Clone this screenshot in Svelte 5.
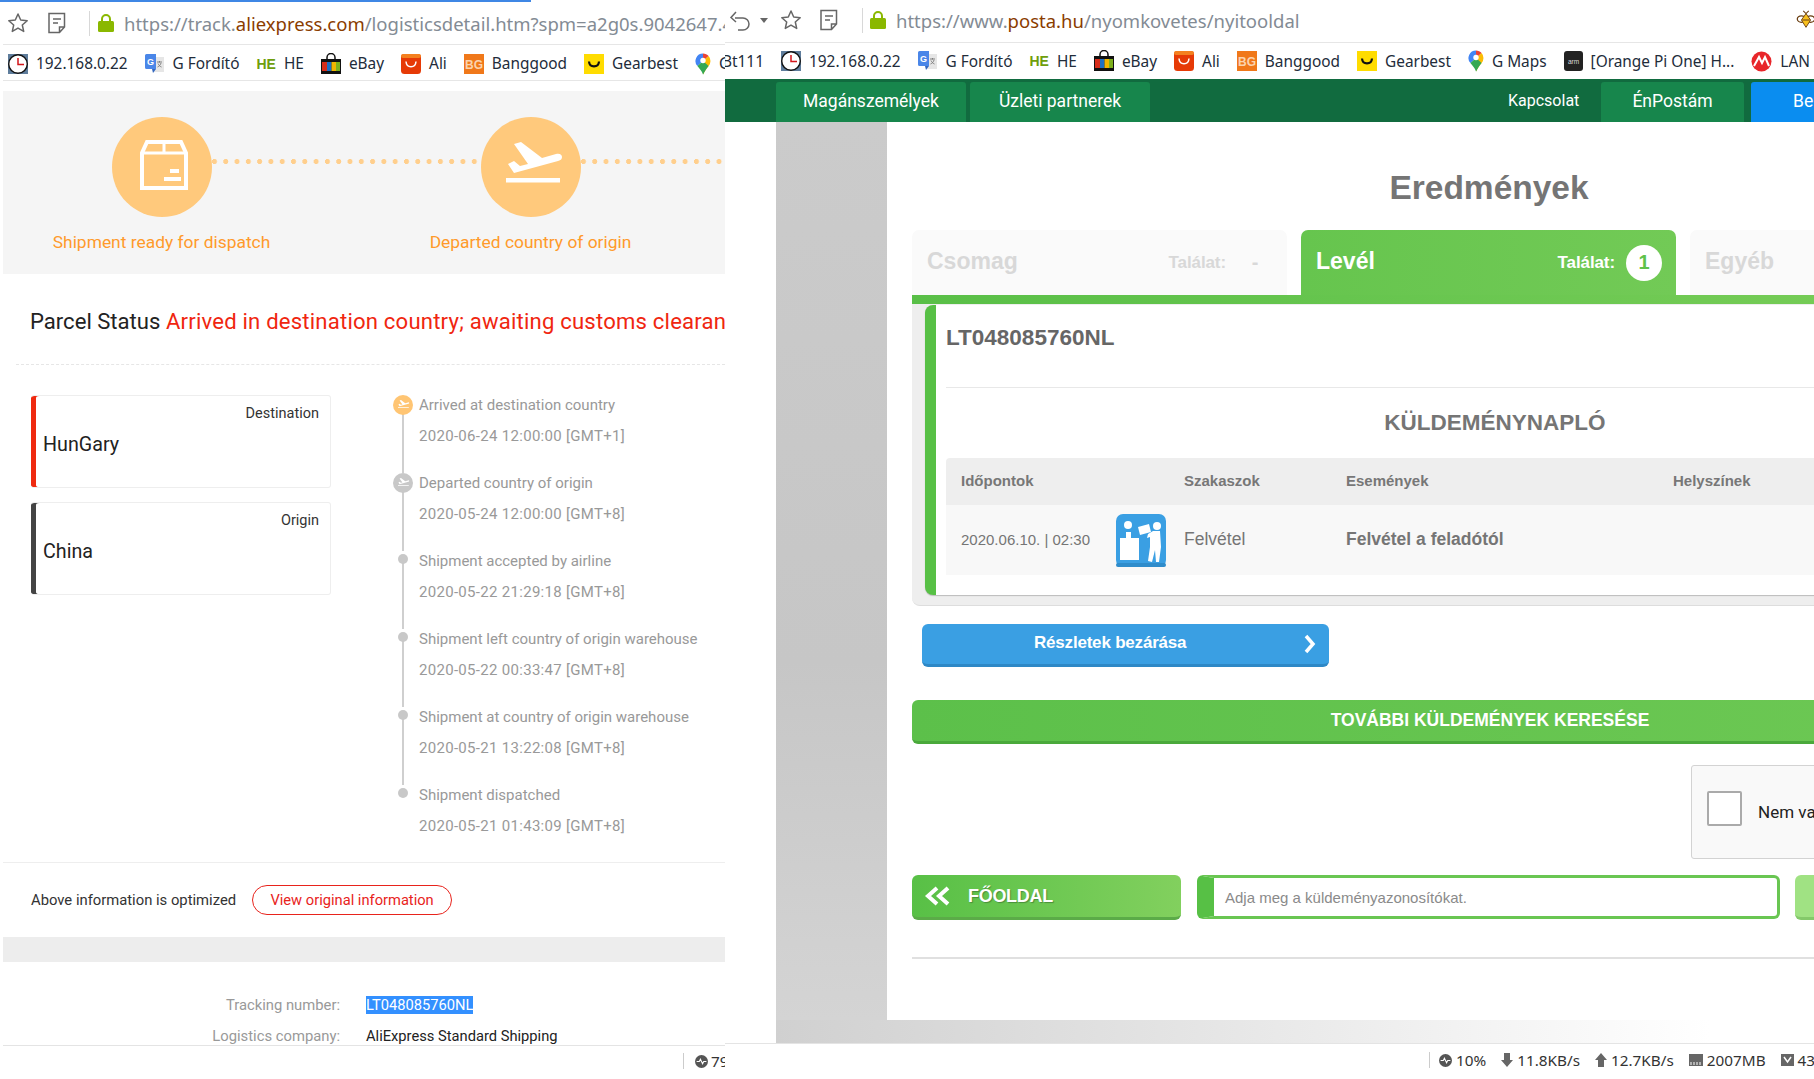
<script>
  const leftMarks = [
    { i: 'clock', t: '192.168.0.22' }, { i: 'trans', t: 'G Fordító' }, { i: 'he', t: 'HE' },
    { i: 'ebay', t: 'eBay' }, { i: 'ali', t: 'Ali' }, { i: 'bg', t: 'Banggood' },
    { i: 'gear', t: 'Gearbest' }, { i: 'maps', t: 'G Maps' }
  ];
  const rightMarks = [
    { i: 'clock', t: '192.168.0.22' }, { i: 'trans', t: 'G Fordító' }, { i: 'he', t: 'HE' },
    { i: 'ebay', t: 'eBay' }, { i: 'ali', t: 'Ali' }, { i: 'bg', t: 'Banggood' },
    { i: 'gear', t: 'Gearbest' }, { i: 'maps', t: 'G Maps' },
    { i: 'arm', t: '[Orange Pi One] H...' }, { i: 'micro', t: 'LAN' }
  ];
  const events = [
    { t: 'Arrived at destination country', d: '2020-06-24 12:00:00 [GMT+1]', k: 'now' },
    { t: 'Departed country of origin', d: '2020-05-24 12:00:00 [GMT+8]', k: 'past' },
    { t: 'Shipment accepted by airline', d: '2020-05-22 21:29:18 [GMT+8]', k: '' },
    { t: 'Shipment left country of origin warehouse', d: '2020-05-22 00:33:47 [GMT+8]', k: '' },
    { t: 'Shipment at country of origin warehouse', d: '2020-05-21 13:22:08 [GMT+8]', k: '' },
    { t: 'Shipment dispatched', d: '2020-05-21 01:43:09 [GMT+8]', k: '' }
  ];
</script>

{#snippet star()}
  <svg class="tool" width="22" height="22" viewBox="0 0 22 22"><path d="M11 2l2.7 6 6.5.7-4.9 4.3 1.4 6.4L11 16.100l-5.700 3.300 1.400-6.400-4.900-4.300 6.500-.7z" fill="none" stroke="#666" stroke-width="1.500" stroke-linejoin="round"/></svg>
{/snippet}
{#snippet note()}
  <svg class="tool" width="20" height="22" viewBox="0 0 20 22"><path d="M2 1.500h15.500v13.500l-5 5.500H2zM17.500 15h-5v5.500M6 7h8M6 11h5" fill="none" stroke="#666" stroke-width="1.500"/></svg>
{/snippet}
{#snippet lock()}
  <svg class="lock" width="16" height="20" viewBox="0 0 16 20"><path d="M4 9V6a4 4 0 0 1 8 0v3" fill="none" stroke="#8ab800" stroke-width="2"/><rect y="8" width="16" height="11" rx="1.500" fill="#8ab800"/></svg>
{/snippet}
{#snippet plane()}
  <path d="M25 61h54v4.500H25z M27 47l6-3 6 5 8-2-14-20 7-2 21 16 14-4c4-1 6 1 6 3s-1 3-4 4L33 56z" fill="#fff"/>
{/snippet}
{#snippet mark(i)}
  {#if i === 'clock'}
    <svg width="20" height="20" viewBox="0 0 20 20"><rect width="20" height="20" fill="#5f7d9c"/><circle cx="10" cy="10" r="9.300" fill="#fff" stroke="#111" stroke-width="1.400"/><path d="M10 4v6.500h6" fill="none" stroke="#d2161a" stroke-width="1.500"/></svg>
  {:else if i === 'trans'}
    <svg width="20" height="20" viewBox="0 0 20 20"><path d="M8 3h11v15H8z" fill="#e6e6e6"/><path d="M12 8h5M14.500 7v1.500M16 9c-.5 2-2 3.500-3.500 4M13 9.500c.6 1.500 2 3 3.500 3.500" fill="none" stroke="#777" stroke-width=".9"/><path d="M0 1.500A1.500 1.500 0 0 1 1.500 0H11v15H1.500A1.500 1.500 0 0 1 0 13.500z" fill="#4a86e8"/><path d="M8 19l3-4H7z" fill="#3367c0"/><text x="5.500" y="10.500" font-size="9" font-weight="700" fill="#fff" text-anchor="middle" font-family="Liberation Sans">G</text></svg>
  {:else if i === 'he'}
    <span class="he">HE</span>
  {:else if i === 'ebay'}
    <svg width="20" height="22" viewBox="0 0 20 22"><path d="M6 7V4.500a4 4 0 0 1 8 0V7" fill="none" stroke="#111" stroke-width="1.500"/><rect y="6" width="20" height="15" fill="#111"/><rect x="1" y="9" width="5" height="9" fill="#d62c1a"/><rect x="6" y="9" width="4.500" height="9" fill="#1c6fc4"/><rect x="10.500" y="9" width="4.500" height="9" fill="#f0b400"/><rect x="15" y="9" width="4" height="9" fill="#7db01c"/></svg>
  {:else if i === 'ali'}
    <svg width="20" height="20" viewBox="0 0 20 20"><rect width="20" height="20" rx="3.500" fill="#e63a06"/><rect width="20" height="4" rx="2" fill="#f4801f"/><path d="M5 7.500c.5 7 9.500 7 10 0" fill="none" stroke="#fff" stroke-width="1.500"/></svg>
  {:else if i === 'bg'}
    <svg width="20" height="20" viewBox="0 0 20 20"><rect width="20" height="20" fill="#f0781a"/><text x="10" y="14.500" font-size="12" font-weight="700" fill="#fbd3ae" text-anchor="middle" font-family="Liberation Sans">BG</text></svg>
  {:else if i === 'gear'}
    <svg width="20" height="20" viewBox="0 0 20 20"><rect width="20" height="20" fill="#ffdc00"/><path d="M5 7.500c.5 6.500 9.500 6.500 10 0" fill="none" stroke="#111" stroke-width="2.200"/></svg>
  {:else if i === 'maps'}
    <svg width="16" height="22" viewBox="0 0 16 22"><path d="M8 0.500a7.500 7.500 0 0 0-5.600 12.500L8 8z" fill="#4285f4"/><path d="M2.400 13C4.500 15.500 7 18 8 21.500L10 17 8 8z" fill="#34a853"/><path d="M8 .5c2.200 0 4.300 1 5.600 2.600L8 8z" fill="#ea4335"/><path d="M13.600 3.100A7.500 7.500 0 0 1 13.600 13C12 15 10.500 17 8 21.500V8z" fill="#fbbc04"/><path d="M8 8l5.600 5c-1.600 2-3.100 4-5.600 8.500z" fill="#34a853"/><circle cx="8" cy="7.500" r="2.700" fill="#fff"/></svg>
  {:else if i === 'arm'}
    <svg width="19" height="20" viewBox="0 0 19 20"><rect width="19" height="20" rx="3" fill="#222"/><text x="9.500" y="12.500" font-size="6.500" fill="#ddd" text-anchor="middle" font-family="Liberation Sans">arm</text></svg>
  {:else if i === 'micro'}
    <svg width="21" height="21" viewBox="0 0 21 21"><circle cx="10.500" cy="10.500" r="10" fill="#e8262a"/><path d="M3 15L8 6l3 6 3-6 4 9" fill="none" stroke="#fff" stroke-width="2"/></svg>
  {/if}
{/snippet}

<div class="desk">
  <section class="win left">
    <div class="progress"></div>
    <header class="bar">
      <span class="ic-star">{@render star()}</span>
      <span class="ic-note">{@render note()}</span>
      <span class="sep"></span>
      {@render lock()}
      <span class="url">https://track.<b>aliexpress.com</b>/logisticsdetail.htm?spm=a2g0s.9042647.4</span>
    </header>
    <nav class="marks lmarks">
      {#each leftMarks as m}
        <span class="bm"><span class="bmi">{@render mark(m.i)}</span>{m.t}</span>
      {/each}
    </nav>
    <div class="page">
      <div class="hero">
        <div class="step">
          <div class="circle">
            <svg width="100" height="100" viewBox="0 0 100 100"><path d="M30 71V36l5-11h34l5 11v35z" fill="none" stroke="#fff" stroke-width="4"/><path d="M30 36h44M52 25v11" stroke="#fff" stroke-width="3"/><path d="M58 52h9v4h-9zM52 60h17v4H52z" fill="#fff"/></svg>
          </div>
          <span class="dots one"></span>
          <p>Shipment ready for dispatch</p>
        </div>
        <div class="step">
          <div class="circle"><svg width="100" height="100" viewBox="0 0 100 100">{@render plane()}</svg></div>
          <span class="dots two"></span>
          <p>Departed country of origin</p>
        </div>
      </div>
      <h2 class="status">Parcel Status <em>Arrived in destination country; awaiting customs clearance</em></h2>
      <div class="detail">
        <div class="cards">
          <div class="card red"><span class="role">Destination</span><span class="place">HunGary</span></div>
          <div class="card dark"><span class="role">Origin</span><span class="place">China</span></div>
        </div>
        <ol class="timeline">
          {#each events as e, n}
            <li class:last={n === events.length - 1}>
              {#if e.k}
                <span class="node {e.k}"><svg width="20" height="20" viewBox="0 0 100 100">{@render plane()}</svg></span>
              {:else}
                <span class="dot"></span>
              {/if}
              <strong>{e.t}</strong>
              <time>{e.d}</time>
            </li>
          {/each}
        </ol>
      </div>
      <div class="optim"><span>Above information is optimized</span><button>View original information</button></div>
      <div class="band"></div>
      <dl class="track">
        <dt>Tracking number:</dt><dd><mark>LT048085760NL</mark></dd>
        <dt>Logistics company:</dt><dd>AliExpress Standard Shipping</dd>
      </dl>
    </div>
    <footer class="stat lstat">
      <span class="vr"></span>
      <svg width="13" height="13" viewBox="0 0 12 12"><circle cx="6" cy="6" r="6" fill="#555"/><path d="M1.500 6h2.500l1-2 2 4 1-2h2.500" fill="none" stroke="#fff"/></svg>
      <span>79</span>
    </footer>
  </section>

  <section class="win right">
    <header class="bar rbar">
      <svg width="22" height="22" viewBox="0 0 22 22"><path d="M6 9h8a6 6 0 0 1 0 12H9M7 3L2 8.500 7 13" fill="none" stroke="#666" stroke-width="1.500"/></svg>
      <span class="caret"></span>
      <span class="ic-star2">{@render star()}</span>
      <span class="ic-note2">{@render note()}</span>
      <span class="sep sep2"></span>
      {@render lock()}
      <span class="url url2">https://www.<b>posta.hu</b>/nyomkovetes/nyitooldal</span>
      <svg class="bee" width="20" height="22" viewBox="0 0 20 24"><ellipse cx="5" cy="11" rx="4.500" ry="3.500" fill="#fff" stroke="#6b3f12" stroke-width="1.400"/><ellipse cx="15" cy="11" rx="4.500" ry="3.500" fill="#fff" stroke="#6b3f12" stroke-width="1.400"/><path d="M10 5l5 7-5 8-5-8z" fill="#f8c01c" stroke="#6b3f12"/><path d="M7 2l3 3 3-3M6 12h8" fill="none" stroke="#6b3f12" stroke-width="1.200"/></svg>
    </header>
    <nav class="marks rmarks">
      <span class="cut">Bt111</span>
      {#each rightMarks as m}
        <span class="bm"><span class="bmi">{@render mark(m.i)}</span>{m.t}</span>
      {/each}
    </nav>
    <div class="topnav">
      <a class="tn" href="#a">Magánszemélyek</a>
      <a class="tn t2" href="#b">Üzleti partnerek</a>
      <span class="contact">Kapcsolat</span>
      <a class="tn t3" href="#c">ÉnPostám</a>
      <a class="tn blue" href="#d">Belépés</a>
    </div>
    <div class="rbody">
      <div class="rmain">
        <div class="stripe"></div>
        <main class="content">
          <h1>Eredmények</h1>
          <div class="tabs">
            <div class="tab"><span class="tname">Csomag</span><span class="hit">Találat:</span><span class="cnt">-</span></div>
            <div class="tab on"><span class="tname">Levél</span><span class="hit">Találat:</span><span class="cnt one">1</span></div>
            <div class="tab"><span class="tname">Egyéb</span><span class="hit">Találat:</span><span class="cnt">-</span></div>
          </div>
          <div class="tabline"></div>
          <div class="wrap">
            <div class="panel">
              <div class="pid">LT048085760NL</div>
              <h3>KÜLDEMÉNYNAPLÓ</h3>
              <div class="thead"><span>Időpontok</span><span>Szakaszok</span><span>Események</span><span>Helyszínek</span></div>
              <div class="trow">
                <span class="date">2020.06.10. | 02:30</span>
                <svg class="pic" width="50" height="53" viewBox="0 0 50 53">
                  <rect width="50" height="53" rx="7" fill="#3a9fe3"/><rect y="49" width="50" height="4" rx="2" fill="#2f8ccb"/>
                  <circle cx="12" cy="11" r="4" fill="#fff"/><circle cx="41" cy="12" r="4" fill="#fff"/>
                  <path d="M4 24h6v-6h5v6h8v22H4z" fill="#fff"/>
                  <path d="M22 13l11-3 2 8-11 3z" fill="#fff"/>
                  <path d="M32 20l5-3h7l1 16-2 15h-3l-1-12-3 12-4-1 2-14v-10l-3 1z" fill="#fff"/>
                </svg>
                <span class="phase">Felvétel</span>
                <span class="evt">Felvétel a feladótól</span>
              </div>
            </div>
          </div>
          <button class="close">Részletek bezárása<svg width="14" height="20" viewBox="0 0 14 20"><path d="M3 2l7 8-7 8" fill="none" stroke="#fff" stroke-width="3.500"/></svg></button>
          <button class="more">TOVÁBBI KÜLDEMÉNYEK KERESÉSE</button>
          <div class="captcha"><span class="check"></span><span class="robot">Nem vagyok robot</span></div>
          <div class="foot">
            <button class="home"><svg width="27" height="20" viewBox="0 0 27 20"><path d="M13 2L4 10l9 8M24 2l-9 8 9 8" fill="none" stroke="#fff" stroke-width="4"/></svg>FŐOLDAL</button>
            <div class="field">Adja meg a küldeményazonosítókat.</div>
            <div class="go"></div>
          </div>
          <hr />
        </main>
      </div>
      <div class="fade"></div>
    </div>
    <footer class="stat rstat">
      <span class="vr"></span>
      <span class="si"><svg width="13" height="13" viewBox="0 0 12 12"><circle cx="6" cy="6" r="6" fill="#555"/><path d="M1.500 6h2.500l1-2 2 4 1-2h2.500" fill="none" stroke="#fff"/></svg>10%</span>
      <span class="si"><svg width="12" height="14" viewBox="0 0 12 14"><path d="M3 0h6v7h3l-6 7-6-7h3z" fill="#666"/></svg>11.8KB/s</span>
      <span class="si"><svg width="12" height="14" viewBox="0 0 12 14"><path d="M3 14h6V7h3L6 0 0 7h3z" fill="#666"/></svg>12.7KB/s</span>
      <span class="si"><svg width="14" height="12" viewBox="0 0 14 12"><path d="M0 0h14v12H0z" fill="#666"/><path d="M2 8v3M5 8v3M8 8v3M11 8v3" stroke="#fff"/></svg>2007MB</span>
      <span class="si"><svg width="13" height="12" viewBox="0 0 13 12"><path d="M0 0h13v12H0z" fill="#666"/><path d="M3 3l3.500 5L10 3" fill="none" stroke="#fff" stroke-width="1.500"/></svg>434</span>
    </footer>
  </section>
</div>

<style>
  :global(body) { margin: 0; background: #fff; }
  * { box-sizing: border-box; }
  .desk { position: relative; width: 1814px; height: 1079px; overflow: hidden; background: #fff; }
  .win { position: absolute; top: 0; height: 1079px; display: flex; flex-direction: column; overflow: hidden; background: #fff; }
  .left { left: 0; width: 725px; font-family: Roboto, sans-serif; }
  .right { left: 725px; width: 1089px; }

  .progress { width: 531px; height: 2px; flex: none; background: #3f87e5; }
  .bar { height: 43px; flex: none; display: flex; align-items: center; padding-left: 4px; border-bottom: 1px solid #e6e6e6; margin-left: 3px; }
  .bar svg { flex: none; }
  .ic-star { display: flex; }
  .ic-note { margin-left: 18px; display: flex; }
  .sep { width: 1px; height: 25px; background: #d8d8d8; margin: 0 8px 0 22px; flex: none; }
  .tool { display: block; }
  .url { font: 18.500px "Noto Sans", sans-serif; color: #838b94; margin-left: 10px; white-space: nowrap; }
  .url b { font-weight: 400; color: #8a3c00; }
  .marks { height: 36px; flex: none; display: flex; align-items: center; padding-left: 5px; margin-left: 3px; border-bottom: 1px solid #e6e6e6; white-space: nowrap; font: 15.400px "Noto Sans", sans-serif; color: #222c3a; }
  .lmarks { padding-top: 2px; }
  .bm { display: inline-flex; align-items: center; margin-right: 17px; flex: none; }
  .bmi { display: inline-flex; align-items: center; margin-right: 8px; }
  .he { font: 700 14px "Liberation Sans", sans-serif; color: #6f9e0d; }

  .page { flex: 1; min-height: 0; overflow: hidden; margin-left: 3px; padding-top: 10px; }
  .hero { height: 183px; background: #f5f5f5; display: flex; overflow: hidden; padding-top: 26px; }
  .step { position: relative; flex: 0 0 369px; text-align: center; margin-left: -26px; }
  .step + .step { margin-left: 0; }
  .step p { margin: 12px 0 0; font-size: 17.400px; line-height: 26px; color: #ff9a2b; }
  .circle { width: 100px; height: 100px; border-radius: 50%; background: #ffc97c; margin: 0 auto; }
  .circle svg { display: block; }
  .dots { position: absolute; top: 42px; height: 5px; width: 269px; left: 234.500px; background: radial-gradient(circle at 2.500px 2.500px, #ffcf8d 2.300px, transparent 2.800px) 0 0 / 11.300px 5px repeat-x; }
  .status { margin: 0 0 0 13px; height: 91px; padding: 30px 0 0 14px; border-bottom: 1px dashed #e6e6e6; font-size: 22.100px; font-weight: 400; line-height: 34px; color: #222; white-space: nowrap; overflow: hidden; }
  .status em { font-style: normal; color: #f0260f; letter-spacing: .2px; }
  .detail { display: flex; height: 497px; padding: 30px 0 0 28px; }
  .cards { width: 300px; display: flex; flex-direction: column; gap: 14px; flex: none; }
  .card { height: 93px; border: 1px solid #eee; border-left: 0; border-radius: 3px; position: relative; padding: 8px 11px 0 12px; display: flex; flex-direction: column; }
  .card.red { box-shadow: inset 5px 0 0 #ef2a10; }
  .card.dark { box-shadow: inset 5px 0 0 #444; }
  .role { align-self: flex-end; font-size: 14.500px; line-height: 20px; color: #333; }
  .place { margin-top: 9px; font-size: 19.700px; line-height: 24px; color: #222; }
  .timeline { list-style: none; margin: 0 0 0 62px; padding: 0; width: 330px; }
  .timeline li { position: relative; height: 78px; padding-left: 26px; }
  .timeline li::before { content: ""; position: absolute; left: 9px; top: 10px; bottom: 0; width: 2px; background: #cfcfcf; }
  .timeline li.last::before { display: none; }
  .timeline strong, .timeline time { display: block; font-weight: 400; font-size: 15px; line-height: 20px; color: #999; white-space: nowrap; }
  .timeline time { margin-top: 11px; letter-spacing: .3px; }
  .node { position: absolute; left: 0; top: 0; width: 20px; height: 20px; border-radius: 50%; display: block; }
  .node svg { display: block; }
  .node.now { background: #ffc573; }
  .node.past { background: #c8c8c8; }
  .dot { position: absolute; left: 5px; top: 3px; width: 10px; height: 10px; border-radius: 50%; background: #c8c8c8; }
  .optim { height: 75px; border-top: 1px solid #eee; display: flex; align-items: center; padding-left: 28px; font-size: 14.800px; color: #333; }
  .optim button { margin-left: 16px; width: 200px; height: 30px; border: 1px solid #e8231c; border-radius: 15px; background: #fff; color: #e8231c; font: 14.700px Roboto, sans-serif; padding: 0; }
  .band { height: 25px; background: #ededed; }
  .track { margin: 34px 0 0; display: grid; grid-template-columns: 337px 1fr; column-gap: 26px; row-gap: 13px; font-size: 14.700px; line-height: 18px; }
  .track dt { text-align: right; color: #999; font-size: 14.800px; }
  .track dd { margin: 0; color: #222; }
  .track mark { background: #3390ff; color: #fff; display: inline-block; }

  .stat { flex: none; display: flex; align-items: center; background: #fff; border-top: 1px solid #e4e4e4; font: 15.300px "Noto Sans", sans-serif; color: #333; white-space: nowrap; padding-bottom: 3px; }
  .stat svg, .stat span { flex: none; }
  .lstat { height: 34px; margin-left: 3px; padding-left: 680px; gap: 3px; }
  .lstat .vr { margin-right: 8px; }
  .vr { width: 1px; height: 16px; background: #ccc; }
  .rstat { height: 36px; padding-left: 704px; }
  .rstat .vr { margin-right: 9px; }
  .si { display: inline-flex; align-items: center; gap: 4px; margin-right: 15px; }

  .rbar { height: 43px; margin-left: 0; padding-left: 4px; position: relative; padding-bottom: 2px; }
  .caret { width: 0; height: 0; border: 4px solid transparent; border-top: 5px solid #666; border-bottom: 0; margin-left: 9px; }
  .ic-star2 { display: flex; margin-left: 12px; }
  .ic-note2 { display: flex; margin-left: 17px; }
  .sep2 { margin: 0 7px 0 23px; }
  .url2 { margin-left: 10px; }
  .bee { position: absolute; left: 1071px; top: 9px; }
  .rmarks { height: 36px; margin-left: 0; padding-left: 0; border-bottom: 0; }
  .cut { margin-left: -3px; margin-right: 17px; flex: none; }
  .topnav { height: 43px; flex: none; background: #116b3f; display: flex; align-items: flex-end; padding-left: 51px; font: 17.500px Roboto, sans-serif; color: #fff; }
  .tn { flex: none; height: 40px; display: flex; align-items: center; justify-content: center; background: #17864c; color: #fff; text-decoration: none; border-radius: 3px 3px 0 0; width: 190px; padding-bottom: 3px; }
  .t2 { margin-left: 4px; width: 180px; }
  .contact { margin-left: 358px; align-self: center; font-size: 16px; width: 93px; flex: none; }
  .t3 { width: 143px; margin-right: 7px; }
  .blue { background: #0a8df0; width: 150px; justify-content: flex-start; padding-left: 42px; }

  .rbody { flex: 1; min-height: 0; display: flex; flex-direction: column; padding-left: 51px; font-family: "Liberation Sans", sans-serif; }
  .rmain { height: 898px; display: flex; overflow: hidden; }
  .stripe { flex: 0 0 111px; background: linear-gradient(#cbcbcb, #c6c6c6 60%, #d4d4d4); }
  .content { flex: 0 0 1181px; padding: 46px 0 0 25px; background: #fff; }
  h1 { margin: 0; width: 1154px; text-align: center; font-size: 33.500px; line-height: 40px; color: #757575; }
  .tabs { display: flex; gap: 14px; margin-top: 22px; }
  .tab { flex: 0 0 375px; height: 65px; background: #fafafa; border-radius: 7px 7px 0 0; display: flex; align-items: center; padding: 0 14px 0 15px; color: #d8d8d8; font-weight: 700; }
  .tab.on { background: linear-gradient(90deg, #66c54e, #72ca56); color: #fff; }
  .tname { font-size: 23px; line-height: 28px; margin-bottom: 3px; flex: 1; }
  .hit { font-size: 17px; letter-spacing: -.1px; }
  .cnt { width: 36px; height: 36px; margin-left: 11px; display: flex; align-items: center; justify-content: center; font-size: 20px; }
  .cnt.one { background: #fff; border-radius: 50%; color: #5fc24b; }
  .tabline { height: 9px; width: 1156px; background: linear-gradient(90deg, #59bf47, #7ccf5a); }
  .wrap { width: 1156px; height: 302px; background: #eee; border-radius: 0 0 0 8px; border-bottom: 1px solid #ddd; padding: 1px 0 0 13px; }
  .panel { height: 290px; background: #fff; border-left: 11px solid #57c045; border-radius: 8px 0 0 8px; box-shadow: 0 1px 1px #bbb; padding-left: 10px; }
  .pid { height: 83px; border-bottom: 1px solid #e8e8e8; padding-top: 20px; font-size: 22.500px; line-height: 26px; font-weight: 700; color: #666; }
  h3 { margin: 17px 0 0; height: 53px; padding-right: 24px; font-size: 22.500px; line-height: 35px; color: #757575; text-align: center; }
  .thead { height: 47px; background: #eee; border-radius: 4px 0 0 0; display: flex; align-items: center; padding: 0 0 2px 15px; font-size: 15px; font-weight: 700; color: #777; }
  .thead span:nth-child(1) { width: 223px; }
  .thead span:nth-child(2) { width: 162px; }
  .thead span:nth-child(3) { width: 327px; }
  .trow { height: 70px; background: #f8f8f8; display: flex; align-items: center; padding-left: 15px; color: #757575; font-size: 17.500px; }
  .date { width: 155px; font-size: 15px; margin-bottom: 2px; }
  .pic { margin-right: 18px; flex: none; }
  .phase { width: 162px; margin-bottom: 2px; }
  .evt { font-weight: 700; margin-bottom: 2px; }
  .close { display: flex; align-items: center; position: relative; margin: 18px 0 0 10px; width: 407px; height: 43px; border: 0; border-bottom: 3px solid #2e88c6; border-radius: 6px; background: #3a9fe3; color: #fff; font: 700 17px "Liberation Sans", sans-serif; letter-spacing: -.2px; padding: 0 0 3px 112px; }
  .close svg { position: absolute; left: 381px; top: 10px; }
  .more { display: block; margin-top: 33px; width: 1156px; height: 44px; border: 0; border-bottom: 3px solid #4aa93b; border-radius: 6px; background: linear-gradient(90deg, #5cc04a, #6fc955); color: #fff; font: 700 17.500px "Liberation Sans", sans-serif; letter-spacing: 0; padding: 0; }
  .captcha { margin: 21px 0 0 779px; width: 304px; height: 94px; background: #f9f9f9; border: 1px solid #d3d3d3; border-radius: 3px; display: flex; align-items: center; padding: 0 0 8px 15px; font: 17px Roboto, sans-serif; color: #222; }
  .check { width: 35px; height: 35px; border: 2px solid #aaa; background: #fff; border-radius: 2px; margin-right: 16px; }
  .robot { margin-top: 7px; }
  .foot { display: flex; margin-top: 16px; height: 45px; }
  .home { display: flex; align-items: center; gap: 17px; width: 269px; height: 45px; border: 0; border-bottom: 3px solid #5bab48; border-radius: 6px; background: linear-gradient(90deg, #58c046, #82d05e); color: #fff; font: 700 18px "Liberation Sans", sans-serif; letter-spacing: -.3px; text-shadow: 1px 1px 1px #4a8e3a; padding: 0 0 0 12px; }
  .field { margin-left: 16px; width: 583px; height: 44px; background: #fff; border: 3px solid #69c652; border-left: 17px solid #57c045; border-radius: 6px; display: flex; align-items: center; padding-left: 11px; font-size: 15px; color: #8a8a8a; }
  .go { margin-left: 15px; width: 100px; height: 45px; border-radius: 6px; background: #a0e283; border-bottom: 3px solid #84c96a; }
  hr { margin: 37px 0 0; width: 1156px; height: 2px; border: 0; background: #e0e0e0; }
  .fade { height: 23px; flex: none; background: linear-gradient(90deg, #d0d0d0, #e2e2e2 35%, #fff 90%); }
</style>
